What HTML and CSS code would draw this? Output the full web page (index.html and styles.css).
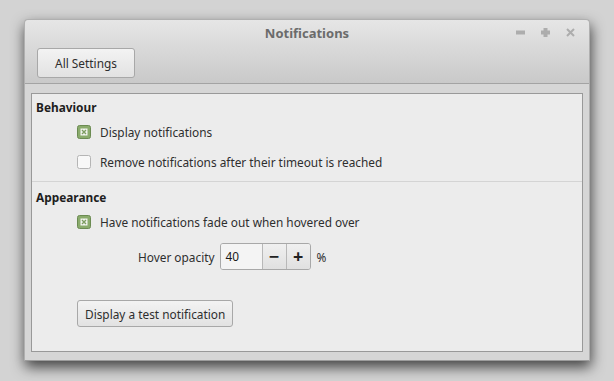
FILE: index.html
```html
<!DOCTYPE html>
<html lang="en">
  <head>
    <meta charset="UTF-8" />
    <title>Notifications</title>
    <link rel="stylesheet" href="styles.css">
  </head>
  <body>
    <div class="window">
      <div class="header">
        <div class="titlebar">
          <span class="title">Notifications</span>
          <div class="controls">
            <svg width="9" height="9" viewBox="0 0 9 9"><rect x="0" y="3.5" width="9" height="2" /></svg>
            <svg width="9" height="9" viewBox="0 0 9 9"><rect x="0" y="3.5" width="9" height="2" /><rect x="3.5" y="0" width="2" height="9" /></svg>
            <svg width="9" height="9" viewBox="0 0 9 9"><path d="M1 1 L8 8 M8 1 L1 8" /></svg>
          </div>
        </div>
        <div class="toolbar">
          <button class="button settingsButton">All Settings</button>
        </div>
      </div>

      <div class="content">
        <div class="section">
          <div class="sectionTitle">Behaviour</div>
          <label class="checkRow">
            <svg class="checkbox" width="14" height="14" viewBox="0 0 14 14">
              <rect class="box checked" x="0.5" y="0.5" width="13" height="13" rx="2" />
              <rect class="mark" x="3.5" y="3.5" width="7" height="7" />
              <path class="cross" d="M5 5 L9 9 M9 5 L5 9" />
            </svg>
            Display notifications
          </label>
          <label class="checkRow">
            <svg class="checkbox" width="14" height="14" viewBox="0 0 14 14">
              <rect class="box" x="0.5" y="0.5" width="13" height="13" rx="2" />
            </svg>
            Remove notifications after their timeout is reached
          </label>
        </div>
        <div class="section">
          <div class="sectionTitle">Appearance</div>
          <label class="checkRow">
            <svg class="checkbox" width="14" height="14" viewBox="0 0 14 14">
              <rect class="box checked" x="0.5" y="0.5" width="13" height="13" rx="2" />
              <rect class="mark" x="3.5" y="3.5" width="7" height="7" />
              <path class="cross" d="M5 5 L9 9 M9 5 L5 9" />
            </svg>
            Have notifications fade out when hovered over
          </label>
          <div class="spinRow">
            <span>Hover opacity</span>
            <div class="spin">
              <span class="spinValue">40</span>
              <span class="spinButton">&minus;</span>
              <span class="spinButton">+</span>
            </div>
            <span class="unit">%</span>
          </div>
          <div class="testRow">
            <button class="button">Display a test notification</button>
          </div>
        </div>
      </div>
    </div>
  </body>
</html>
```

FILE: styles.css
```css
html {
  background-color: #d3d3d3;
}

body {
  margin: 0;
  min-height: 100vh;
  box-sizing: border-box;
  background-color: #d3d3d3;
  font-family: "Noto Sans", "Open Sans", sans-serif;
  font-size: 11.85px;
  color: #2e2e2e;
  padding: 19px 0 0 24px;
}

.window {
  width: 566px;
  height: 342px;
  box-sizing: border-box;
  background-color: #d6d6d6;
  border: 1px solid #b0b0b0;
  border-bottom-color: #9c9c9c;
  border-radius: 4px 4px 0 0;
  box-shadow: 1px 6px 14px rgba(0, 0, 0, 0.7);
  display: flex;
  flex-direction: column;
}

.header {
  height: 64px;
  box-sizing: border-box;
  background: linear-gradient(#e6e6e6, #c9c9c9);
  border-bottom: 1px solid #a3a3a3;
  border-radius: 4px 4px 0 0;
}

.titlebar {
  height: 26px;
  display: flex;
  align-items: center;
  justify-content: center;
  position: relative;
}

.title {
  font-size: 13px;
  font-weight: bold;
  color: #6b6b6b;
}

.controls {
  position: absolute;
  right: 14px;
  top: 8px;
  display: flex;
  gap: 16px;
}

.controls svg {
  fill: #adadad;
  stroke: #adadad;
  stroke-width: 2;
}

.toolbar {
  padding: 2px 0 0 12px;
}

.button {
  font-family: "Noto Sans", "Open Sans", sans-serif;
  font-size: 11.85px;
  color: #2e2e2e;
  background: linear-gradient(#f3f3f3, #e2e2e2);
  border: 1px solid #a8a8a8;
  border-radius: 3px;
  padding: 0 7px;
  height: 28px;
  white-space: nowrap;
}

.settingsButton {
  width: 98px;
  height: 30px;
}

.content {
  flex: 1;
  margin: 9px 6px 8px 6px;
  background-color: #ececec;
  border: 1px solid #999999;
}

.section {
  padding: 3px 0 0 4px;
}

.section:first-child {
  padding-bottom: 4px;
}

.section + .section {
  border-top: 1px solid #d4d4d4;
  padding-top: 5px;
}

.sectionTitle {
  font-weight: bold;
  color: #1e1e1e;
  height: 20px;
  line-height: 20px;
}

.checkRow {
  display: flex;
  align-items: center;
  gap: 9px;
  height: 30px;
  padding-left: 41px;
}

.checkbox .box {
  fill: #f8f8f8;
  stroke: #b5b5b5;
}

.checkbox .box.checked {
  fill: #8aab6c;
  stroke: #6b8b52;
}

.checkbox .mark {
  fill: #f2f4ef;
}

.checkbox .cross {
  stroke: #7d9d62;
  stroke-width: 1.4;
}

.spinRow {
  display: flex;
  align-items: center;
  gap: 5px;
  padding-left: 102px;
  margin-top: 6px;
}

.spin {
  display: flex;
  height: 27px;
  box-sizing: border-box;
  border: 1px solid #a8a8a8;
  border-radius: 3px;
  overflow: hidden;
}

.spinValue {
  width: 36px;
  background-color: #f4f4f4;
  padding-left: 5px;
  line-height: 25px;
  color: #1a1a1a;
}

.spinButton {
  width: 23px;
  border-left: 1px solid #b8b8b8;
  background: linear-gradient(#f0f0f0, #e0e0e0);
  text-align: center;
  font-size: 18px;
  font-weight: bold;
  line-height: 24px;
  color: #222;
}

.unit {
  margin-left: 1px;
}

.testRow {
  padding: 30px 0 0 41px;
}

.testRow .button {
  height: 27px;
}
```
